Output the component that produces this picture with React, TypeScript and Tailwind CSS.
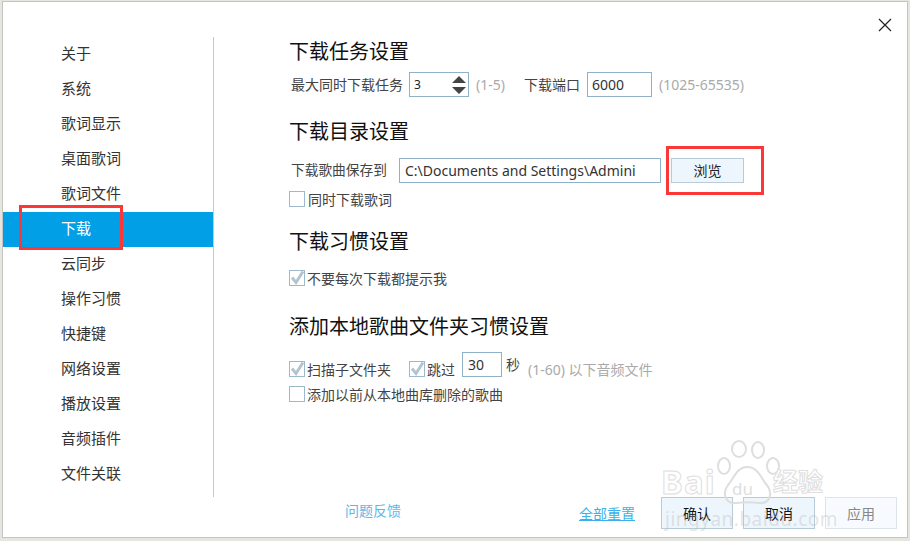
const navItems = [
  "关于",
  "系统",
  "歌词显示",
  "桌面歌词",
  "歌词文件",
  "下载",
  "云同步",
  "操作习惯",
  "快捷键",
  "网络设置",
  "播放设置",
  "音频插件",
  "文件关联",
];

function Check({ checked, className = "" }: { checked?: boolean; className?: string }) {
  return (
    <span className={`flex h-4 w-4 shrink-0 items-center justify-center border border-[#9db9cc] bg-white ${className}`}>
      {checked && (
        <svg width="16" height="16" viewBox="0 0 16 16" className="shrink-0">
          <path d="M3 7.5 L7 12.5 L14 1.5" fill="none" stroke="#b4c4cf" strokeWidth="3" />
        </svg>
      )}
    </span>
  );
}

function Heading({ children, className = "" }: { children: string; className?: string }) {
  return <h2 className={`h-[30px] text-[20px] leading-[30px] text-[#111] ${className}`}>{children}</h2>;
}

function FootButton({ children, disabled }: { children: string; disabled?: boolean }) {
  return (
    <button
      className={`h-8 w-[72px] border text-[14px] ${
        disabled
          ? "border-[#dde5ec] bg-[#f7fbff] text-[#888]"
          : "border-[#b9cad8] bg-[#eef6fd] text-[#111]"
      }`}
    >
      {children}
    </button>
  );
}

function Watermark() {
  return (
    <div className="pointer-events-none absolute left-[695px] top-[440px] h-[101px] w-[215px]">
      <svg width="100" height="72" viewBox="0 0 100 72" className="absolute left-[0px] top-0" fill="none" stroke="#dedede" strokeWidth="2">
        <ellipse cx="44" cy="9" rx="7" ry="8" />
        <ellipse cx="63" cy="10" rx="6" ry="8" />
        <ellipse cx="29" cy="26" rx="6" ry="8" />
        <ellipse cx="78" cy="26" rx="6" ry="8" />
        <path d="M52 27 C63 27 66 38 71 44 C78 52 76 64 64 63 C57 62 48 62 41 63 C30 64 27 53 33 45 C39 38 42 27 52 27 Z" />
      </svg>
      <span className="absolute left-[-34px] top-[22px] text-[33px] font-bold leading-[40px] tracking-[1px] text-white [-webkit-text-stroke:1px_#dedede]">
        Bai
      </span>
      <span className="absolute left-[37px] top-[39px] text-[17px] leading-[20px] text-[#dedede]">du</span>
      <span className="absolute left-[78px] top-[25px] text-[25px] font-bold leading-[32px] text-white [-webkit-text-stroke:1px_#dedede]">
        经验
      </span>
      <span className="absolute left-[-30px] top-[67px] whitespace-nowrap text-[19px] leading-[24px] tracking-[0.5px] text-[#bbb]/40">
        jingyan.baidu.com
      </span>
    </div>
  );
}

export default function App() {
  return (
    <div className="relative h-[541px] w-[910px] overflow-hidden bg-[#e6e6e0] font-['Noto_Sans','Noto_Sans_CJK_SC',sans-serif]">
      <div className="relative ml-[2px] mt-px flex h-[537px] w-[906px] flex-col border border-[#c4c4c4] bg-white pt-[35px]">
        <button className="absolute right-[15px] top-[16px]" aria-label="close">
          <svg width="14" height="14" viewBox="0 0 14 14">
            <path d="M1 1 L13 13 M13 1 L1 13" stroke="#222" strokeWidth="1.2" />
          </svg>
        </button>

        <div className="flex h-[460px]">
          <nav className="w-[210px] shrink-0 border-r border-[#c8c8c8] box-content">
            {navItems.map((item) => (
              <div
                key={item}
                className={`h-[35px] pl-[58px] text-[15px] leading-[33px] ${
                  item === "下载" ? "bg-[#009fe6] text-white" : "text-[#333]"
                }`}
              >
                {item}
              </div>
            ))}
          </nav>

          <main className="pl-[75px] text-[14px] text-[#444]">
            <Heading>下载任务设置</Heading>
            <div className="mt-[5px] flex h-[25px] items-center pl-[2px]">
              <span className="w-[118px]">最大同时下载任务</span>
              <div className="flex h-[25px] w-[60px] items-center justify-between border border-[#8fb2c8] pl-[4px] pr-px text-[12px] text-[#222]">
                3
                <svg width="16" height="20" viewBox="0 0 16 20">
                  <path d="M8 1 L15 8 L1 8 Z M1 12 L15 12 L8 19 Z" fill="#444" />
                </svg>
              </div>
              <span className="ml-[7px] w-[48px] text-[#aaa]">(1-5)</span>
              <span className="ml-[0px] w-[63px]">下载端口</span>
              <div className="flex h-[25px] w-[65px] items-center border border-[#8fb2c8] pl-[4px] text-[14px] text-[#333]">
                6000
              </div>
              <span className="ml-[7px] text-[#aaa]">(1025-65535)</span>
            </div>

            <Heading className="mt-[20px]">下载目录设置</Heading>
            <div className="mt-[11px] flex h-[25px] items-center pl-[2px]">
              <span className="w-[108px] text-[13.7px]">下载歌曲保存到</span>
              <div className="flex h-[25px] w-[262px] items-center overflow-hidden whitespace-nowrap border border-[#8fb2c8] pl-[5px] text-[14px] text-[#333]">
                C:\Documents and Settings\Admini
              </div>
              <button className="ml-[10px] h-[25px] w-[73px] border border-[#b9cad8] bg-[#eef6fd] text-[14px] text-[#222]">
                浏览
              </button>
            </div>
            <label className="mt-[8px] flex h-4 items-center gap-[3px]">
              <Check />
              同时下载歌词
            </label>

            <Heading className="mt-[20px]">下载习惯设置</Heading>
            <label className="mt-[13px] flex h-4 items-center gap-[2px]">
              <Check checked />
              不要每次下载都提示我
            </label>

            <Heading className="mt-[26px]">添加本地歌曲文件夹习惯设置</Heading>
            <div className="mt-[10px] flex h-[25px] items-center">
              <Check checked className="mt-[9px]" />
              <span className="ml-[2px] mt-[9px] w-[102px]">扫描子文件夹</span>
              <Check checked className="mt-[9px]" />
              <span className="ml-[2px] mt-[9px] w-[32px]">跳过</span>
              <div className="ml-[3px] flex h-[25px] w-[40px] items-center border border-[#8fb2c8] pl-[5px] text-[14px] text-[#333]">
                30
              </div>
              <span className="ml-[4px]">秒</span>
              <span className="ml-[8px] mt-[9px] text-[#aaa]">(1-60) 以下音频文件</span>
            </div>
            <label className="mt-[9px] flex h-4 items-center gap-[2px]">
              <Check />
              添加以前从本地曲库删除的歌曲
            </label>
          </main>
        </div>

        <footer className="flex h-8 items-start text-[14px]">
          <a className="ml-[342px] mt-[4px] leading-[20px] text-[#5cb8ea]">问题反馈</a>
          <a className="ml-[178px] mt-[7px] leading-[20px] text-[#3bb0ea] underline">全部重置</a>
          <div className="ml-[26px] flex gap-[10px]">
            <FootButton>确认</FootButton>
            <FootButton>取消</FootButton>
            <FootButton disabled>应用</FootButton>
          </div>
        </footer>
      </div>

      <div className="pointer-events-none absolute left-[19px] top-[205px] h-[45px] w-[104px] border-[3px] border-[#fb3737]" />
      <div className="pointer-events-none absolute left-[666px] top-[146px] h-[49px] w-[98px] border-[3px] border-[#fb3737]" />
      <Watermark />
    </div>
  );
}
